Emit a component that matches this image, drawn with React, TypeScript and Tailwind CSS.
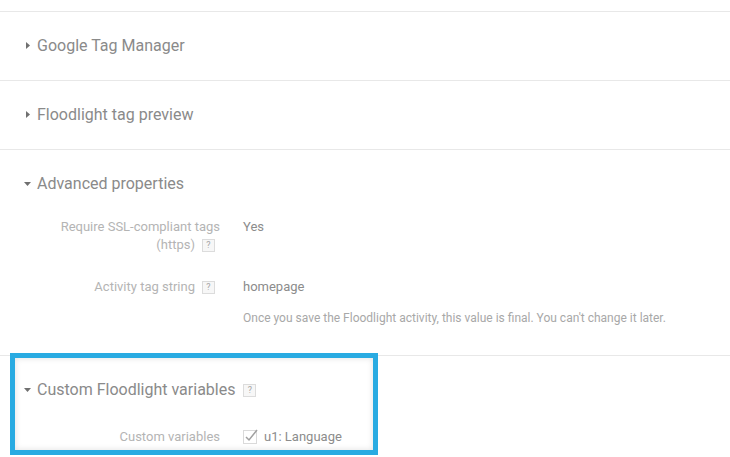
import React from "react";

const font = { fontFamily: "Roboto, 'Liberation Sans', sans-serif" };

function Help() {
  return (
    <span className="inline-flex items-center justify-center w-[13px] h-[13px] border border-[#dcdcdc] bg-[#f7f7f7] text-[9px] leading-none text-[#a5a5a5] align-middle ml-[7px] mr-[5px]">
      ?
    </span>
  );
}

function Caret({ open }: { open?: boolean }) {
  return open ? (
    <svg width="7" height="4" viewBox="0 0 7 4" className="mr-[6px]">
      <path d="M0 0 L7 0 L3.5 4 Z" fill="#707070" />
    </svg>
  ) : (
    <svg width="4" height="7" viewBox="0 0 4 7" className="ml-[2px] mr-[7px]">
      <path d="M0 0 L4 3.5 L0 7 Z" fill="#707070" />
    </svg>
  );
}

function Header({ title, open, help }: { title: string; open?: boolean; help?: boolean }) {
  return (
    <div className="flex items-center h-[68px] pl-[24px] pb-[1px]">
      <Caret open={open} />
      <span className="text-[16px] text-[#8a8a8a]">{title}</span>
      {help && <span className="ml-[1px]"><Help /></span>}
    </div>
  );
}

function Row({ label, children, className }: { label: React.ReactNode; children: React.ReactNode; className?: string }) {
  return (
    <div className={"flex " + (className ?? "")}>
      <div className="w-[220px] text-right text-[13px] leading-[18px] text-[#b4b4b4] pl-[50px]">{label}</div>
      <div className="pl-[23px] text-[13px] leading-[18px] text-[#8c8c8c]">{children}</div>
    </div>
  );
}

export default function App() {
  return (
    <div className="relative w-[730px] h-[457px] bg-white overflow-hidden" style={font}>
      <div className="h-[12px] border-b border-[#e8e8e8]" />
      <div className="border-b border-[#e8e8e8]">
        <Header title="Google Tag Manager" />
      </div>
      <div className="border-b border-[#e8e8e8]">
        <Header title="Floodlight tag preview" />
      </div>
      <div className="border-b border-[#e8e8e8] h-[206px]">
        <Header title="Advanced properties" open />
        <Row label={<>Require SSL-compliant tags<br />(https)<Help /></>} className="mt-[0px]">
          Yes
        </Row>
        <Row label={<>Activity tag string<Help /></>} className="mt-[24px]">
          <div>homepage</div>
          <div className="text-[12px] text-[#a8a8a8] mt-[13px]">
            Once you save the Floodlight activity, this value is final. You can't change it later.
          </div>
        </Row>
      </div>
      <div>
        <Header title="Custom Floodlight variables" open help />
        <Row label="Custom variables" className="mt-[4px]">
          <div className="flex items-center">
            <svg width="16" height="16" viewBox="0 0 16 16" className="mr-[5px] mt-[-2px]">
              <rect x="0.5" y="2.5" width="13" height="13" fill="none" stroke="#dadada" />
              <path d="M3 9 L6 12 L14 2" fill="none" stroke="#a0a0a0" strokeWidth="1.5" />
            </svg>
            <span>u1: Language</span>
          </div>
        </Row>
      </div>
      <div className="absolute left-[10px] top-[353px] w-[368px] h-[102px] border-[5px] border-[#29abe2] shadow-[inset_0_0_6px_rgba(0,0,0,0.12)]" />
    </div>
  );
}
